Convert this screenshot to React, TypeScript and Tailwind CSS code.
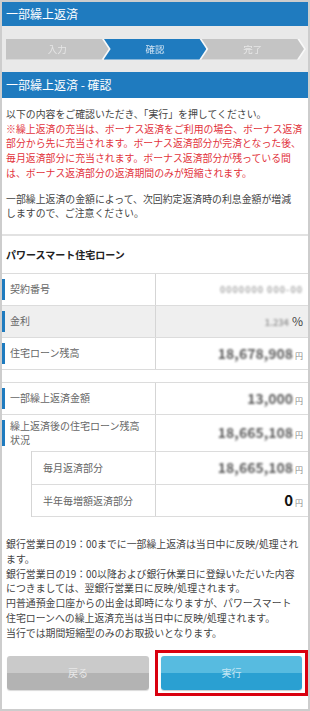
import React from "react";

const font = "font-['Noto_Sans_CJK_JP','Noto_Sans',sans-serif]";

function Mosaic({ text, light }: { text: string; light?: boolean }) {
  return (
    <span
      className={
        light
          ? "text-[9px] font-bold tracking-[1px] text-[#a8a8a8] blur-[1.1px]"
          : "text-[14px] font-bold text-[#5e5e5e] blur-[1.3px]"
      }
    >
      {text}
    </span>
  );
}

function Yen({ children }: { children: React.ReactNode }) {
  return (
    <span className="flex items-baseline">
      {children}
      <span className="ml-[2px] text-[8px] text-[#888]">円</span>
    </span>
  );
}

function Row({
  label,
  value,
  gray,
  tall,
}: {
  label: React.ReactNode;
  value: React.ReactNode;
  gray?: boolean;
  tall?: boolean;
}) {
  return (
    <div
      className={`flex ${tall ? "h-[36px]" : "h-[32px] border-b border-[#dcdcdc]"} ${
        gray ? "bg-[#efefef]" : "bg-white"
      }`}
    >
      <div className="flex w-[153px] shrink-0">
        <div className="my-[5px] w-[3px] bg-[#1f7bbf]" />
        <div className="ml-[5px] flex items-center text-[10px] leading-[14px] text-[#666]">
          {label}
        </div>
      </div>
      <div className="flex flex-1 items-center justify-end border-l border-[#d5d5d5] pr-[5px]">
        {value}
      </div>
    </div>
  );
}

function SubRow({ label, value, last }: { label: string; value: React.ReactNode; last?: boolean }) {
  return (
    <div className={`flex h-[33px] border-t border-[#dcdcdc] ${last ? "border-b" : ""}`}>
      <div className="flex w-[123px] shrink-0 items-center pl-[11px] text-[10px] text-[#666]">
        {label}
      </div>
      <div className="flex flex-1 items-center justify-end border-l border-[#d5d5d5] pr-[5px]">
        {value}
      </div>
    </div>
  );
}

const steps = [
  { label: "入力", active: false },
  { label: "確認", active: true },
  { label: "完了", active: false },
];

export default function App() {
  return (
    <div
      className={`h-[711px] w-[310px] overflow-hidden border-2 border-[#cdcdcd] bg-white ${font}`}
    >
      <div className="flex h-[24px] items-center bg-[#1f7bbf] px-[4px] text-[12px] text-white">
        一部繰上返済
      </div>

      <div className="flex h-[46px] items-center bg-[#e9e9e9] px-[4px]">
        <div className="flex w-full">
          {steps.map((s, i) => (
            <div
              key={s.label}
              className={`flex-1 [filter:drop-shadow(2px_0_0_#f8f8f8)] ${i > 0 ? "-ml-[5px]" : ""}`}
            >
              <div
                className={`flex h-[21px] items-center justify-center text-[9.5px] ${
                  s.active ? "bg-[#1f7bbf] text-[#cfe2f2]" : "bg-[#c4c4c4] text-[#e6e6e6]"
                } ${
                  i === 0
                    ? "[clip-path:polygon(0_0,calc(100%_-_7px)_0,100%_50%,calc(100%_-_7px)_100%,0_100%)]"
                    : "[clip-path:polygon(0_0,calc(100%_-_7px)_0,100%_50%,calc(100%_-_7px)_100%,0_100%,7px_50%)]"
                }`}
              >
                {s.label}
              </div>
            </div>
          ))}
        </div>
      </div>

      <div className="flex h-[26px] items-center bg-[#1f7bbf] px-[4px] text-[12px] text-white">
        一部繰上返済 - 確認
      </div>

      <div className="px-[4px] pb-[13px] pt-[9px] text-[9.9px] leading-[14.7px] text-[#444]">
        <div className="whitespace-nowrap">以下の内容をご確認いただき、「実行」を押してください。</div>
        <div className="whitespace-nowrap text-[#e2333c]">
          <div>※繰上返済の充当は、ボーナス返済をご利用の場合、ボーナス返済</div>
          <div>部分から先に充当されます。ボーナス返済部分が完済となった後、</div>
          <div>毎月返済部分に充当されます。ボーナス返済部分が残っている間</div>
          <div>は、ボーナス返済部分の返済期間のみが短縮されます。</div>
        </div>
        <div className="mt-[11px] whitespace-nowrap">
          <div>一部繰上返済の金額によって、次回約定返済時の利息金額が増減</div>
          <div>しますので、ご注意ください。</div>
        </div>
      </div>

      <div className="h-[2px] bg-[#e2e2e2]" />

      <div className="flex h-[37px] items-center px-[4px] text-[10px] font-bold text-[#222]">
        パワースマート住宅ローン
      </div>

      <div className="border-t border-[#dcdcdc]">
        <Row label="契約番号" value={<Mosaic light text="0000000 000-00" />} />
        <Row
          gray
          label="金利"
          value={
            <span className="flex items-baseline">
              <span className="text-[9px] font-bold text-[#999] blur-[1px]">1.234</span>
              <span className="ml-[3px] text-[12px] text-[#444]">%</span>
            </span>
          }
        />
        <Row
          label="住宅ローン残高"
          value={
            <Yen>
              <Mosaic text="18,678,908" />
            </Yen>
          }
        />
      </div>

      <div className="h-[12px]" />

      <div className="border-t border-[#dcdcdc]">
        <Row
          label="一部繰上返済金額"
          value={
            <Yen>
              <Mosaic text="13,000" />
            </Yen>
          }
        />
        <Row
          tall
          label={
            <span>
              繰上返済後の住宅ローン残高
              <br />
              状況
            </span>
          }
          value={
            <Yen>
              <Mosaic text="18,665,108" />
            </Yen>
          }
        />
        <div className="flex">
          <div className="w-[29px] shrink-0" />
          <div className="flex-1 border-l border-[#d5d5d5]">
            <SubRow
              label="毎月返済部分"
              value={
                <Yen>
                  <Mosaic text="18,665,108" />
                </Yen>
              }
            />
            <SubRow
              last
              label="半年毎増額返済部分"
              value={
                <Yen>
                  <span className="text-[15px] font-bold leading-none text-[#111]">0</span>
                </Yen>
              }
            />
          </div>
        </div>
      </div>

      <div className="whitespace-nowrap px-[4px] pt-[20px] text-[9.9px] leading-[14.8px] text-[#444]">
        <div>銀行営業日の19：00までに一部繰上返済は当日中に反映/処理され</div>
        <div>ます。</div>
        <div>銀行営業日の19：00以降および銀行休業日に登録いただいた内容</div>
        <div>につきましては、翌銀行営業日に反映/処理されます。</div>
        <div>円普通預金口座からの出金は即時になりますが、パワースマート</div>
        <div>住宅ローンへの繰上返済充当は当日中に反映/処理されます。</div>
        <div>当行では期間短縮型のみのお取扱いとなります。</div>
      </div>

      <div className="mt-[9px] flex items-center pl-[5px]">
        <button className="flex h-[34px] w-[142px] items-center justify-center rounded-[3px] bg-[linear-gradient(#cacaca_50%,#b3b3b3_50%)] text-[10px] text-[#e8e8e8] shadow-[0_1px_1px_rgba(0,0,0,0.15)]">
          戻る
        </button>
        <div className="ml-[6px] border-[3px] border-[#d9000f] px-[3px] pb-[3px] pt-[3px]">
          <button className="flex h-[34px] w-[141px] items-center justify-center rounded-[3px] bg-[linear-gradient(#57bbe0_50%,#2aa0d2_50%)] text-[10px] text-[#c4e6f5] shadow-[0_1px_1px_rgba(0,0,0,0.2)]">
            実行
          </button>
        </div>
      </div>
    </div>
  );
}
